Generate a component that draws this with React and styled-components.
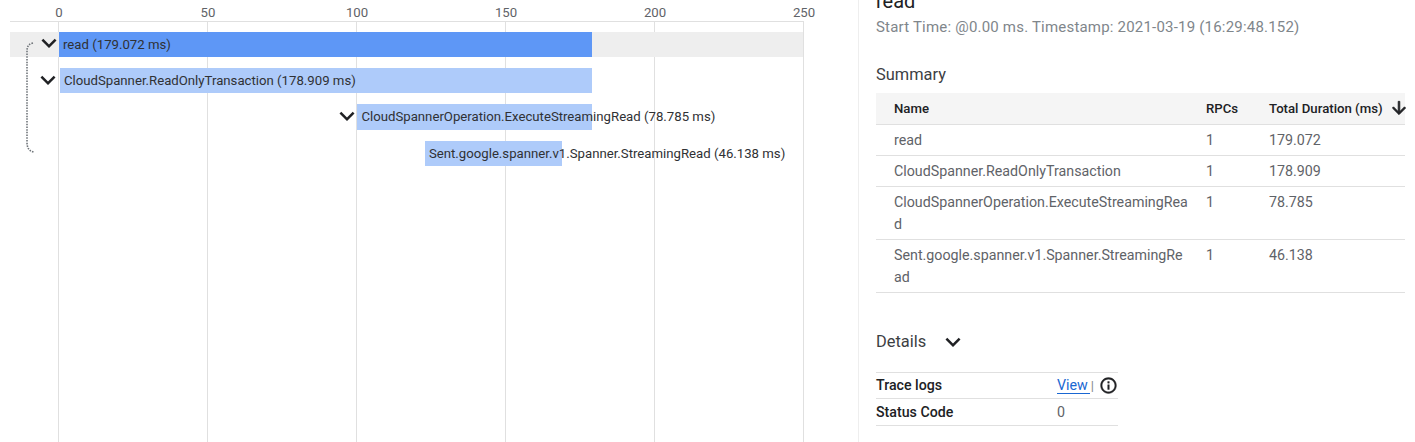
import React from "react"
import styled, { createGlobalStyle } from "styled-components"

const SCALE = 2.975
const ZERO_X = 49 // offset of 0 ms inside the row

const ticks = [0, 50, 100, 150, 200, 250]

const spans = [
	{ name: "read", start: 0, duration: 179.072, selected: true, open: true, overlap: 4.5 },
	{ name: "CloudSpanner.ReadOnlyTransaction", start: 0.3, duration: 178.909, open: true, overlap: 3.5 },
	{ name: "CloudSpannerOperation.ExecuteStreamingRead", start: 100.3, duration: 78.785, open: true, overlap: 4.5 },
	{ name: "Sent.google.spanner.v1.Spanner.StreamingRead", start: 123, duration: 46.138 },
]

const summary = [
	{ name: "read", rpcs: 1, total: "179.072" },
	{ name: "CloudSpanner.ReadOnlyTransaction", rpcs: 1, total: "178.909" },
	{ name: "CloudSpannerOperation.ExecuteStreamingRead", rpcs: 1, total: "78.785" },
	{ name: "Sent.google.spanner.v1.Spanner.StreamingRead", rpcs: 1, total: "46.138" },
]

const GlobalStyle = createGlobalStyle`
	html, body {
		margin: 0;
		height: 100%;
		overflow: hidden;
		background: #fff;
	}
	body {
		font-family: Roboto, "Liberation Sans", sans-serif;
		color: #3c4043;
	}
`

const Page = styled.div`
	display: flex;
	width: 1415px;
	height: 442px;
	overflow: hidden;
`

const ChartPane = styled.div`
	position: relative;
	flex: none;
	box-sizing: border-box;
	width: 859px;
	height: 442px;
	padding: 31.9px 0 0 10px;
	border-right: 1px solid #eeeeee;
`

const Grid = styled.div`
	position: absolute;
	top: 21px;
	left: 10px;
	bottom: 0;
	width: 794px;
	padding-left: 48px;
	box-sizing: border-box;
	display: flex;
	border-top: 1px solid #e0e0e0;
`

const Tick = styled.div`
	position: relative;
	flex: none;
	width: ${({ $last }) => ($last ? "1px" : "149px")};
	box-sizing: border-box;
	border-left: 1px solid #e0e0e0;
`

const TickLabel = styled.span`
	position: absolute;
	top: -17px;
	left: 0;
	transform: translateX(-50%);
	font-size: 13.2px;
	line-height: 16px;
	color: #5f6368;
`

const Rows = styled.div`
	position: relative;
	display: flex;
	flex-direction: column;
	gap: 10.95px;
	width: 793px;
`

const Row = styled.div`
	display: flex;
	height: 25.3px;
	background: ${({ $selected }) => ($selected ? "#eeeeee" : "transparent")};
`

const Bar = styled.div`
	position: relative;
	flex: none;
	box-sizing: border-box;
	height: 100%;
	padding-left: 4px;
	font-size: 13.2px;
	line-height: 25px;
	white-space: nowrap;
	color: #303134;
	background: ${({ $selected }) => ($selected ? "#5e97f6" : "#aecbfa")};
`

const Toggle = styled.svg`
	position: absolute;
	top: -3.5px;
	right: calc(100% - ${({ $overlap }) => $overlap}px);
	width: 30px;
	height: 30px;
	fill: #202124;
`

const Connector = styled.svg`
	position: absolute;
	top: 42px;
	left: 24px;
	width: 12px;
	height: 112px;
	fill: none;
	stroke: #70757a;
	stroke-width: 1.6;
	stroke-dasharray: 1.5 1.2;
`

const DetailPane = styled.div`
	flex: none;
	box-sizing: border-box;
	width: 529px;
	margin-left: 17px;
`

const Title = styled.h2`
	margin: -11px 0 0;
	font-size: 20px;
	font-weight: 400;
	line-height: 24px;
	color: #202124;
`

const Subtitle = styled.div`
	margin-top: 4px;
	font-size: 15px;
	letter-spacing: 0.2px;
	line-height: 20px;
	color: #80868b;
`

const SectionTitle = styled.h3`
	margin: 28px 0 0;
	font-size: 16.4px;
	font-weight: 400;
	line-height: 20px;
	color: #3c4043;
`

const SummaryTable = styled.table`
	width: 529px;
	margin-top: 8px;
	border-collapse: collapse;
	table-layout: fixed;
`

const HeadCell = styled.th`
	box-sizing: border-box;
	width: ${({ $width }) => $width}px;
	height: 31px;
	padding: 0 0 0 ${({ $pad }) => $pad || 0}px;
	background: #f5f5f5;
	border-bottom: 1px solid #e0e0e0;
	font-size: 13.2px;
	font-weight: 500;
	text-align: left;
	color: #202124;
	white-space: nowrap;
`

const HeadInner = styled.div`
	display: flex;
	align-items: center;
	justify-content: space-between;
`

const SortArrow = styled.svg`
	flex: none;
	width: 20px;
	height: 20px;
	margin-right: -4px;
	fill: #202124;
	stroke: #202124;
	stroke-width: 0.9;
`

const Cell = styled.td`
	padding: 4px 0 4px ${({ $pad }) => $pad || 0}px;
	border-bottom: 1px solid #e0e0e0;
	font-size: 14.25px;
	line-height: 22px;
	vertical-align: top;
	color: #5f6368;
`

const NameText = styled.div`
	width: 296px;
	word-break: break-all;
`

const DetailsHead = styled.div`
	display: flex;
	align-items: center;
	margin-top: 34px;
	font-size: 16.4px;
	line-height: 20px;
	color: #3c4043;
`

const DetailsToggle = styled.svg`
	width: 30px;
	height: 30px;
	margin-left: 12px;
	fill: #202124;
`

const DetailRows = styled.div`
	width: 242px;
	margin-top: 15px;
	border-top: 1px solid #e0e0e0;
`

const DetailRow = styled.div`
	display: grid;
	grid-template-columns: 181px 1fr;
	align-items: center;
	height: 25.7px;
	border-bottom: 1px solid #e0e0e0;
	font-size: 14.25px;
`

const DetailLabel = styled.span`
	font-size: 14.2px;
	font-weight: 500;
	color: #202124;
`

const DetailValue = styled.span`
	display: flex;
	align-items: center;
	color: #5f6368;
`

const LogLink = styled.a`
	padding-right: 2px;
	color: #1967d2;
	text-decoration: none;
	border-bottom: 1px solid #1967d2;
	line-height: 16px;
`

const Sep = styled.span`
	margin-left: 1px;
	font-size: 13px;
	color: #80868b;
`

const InfoIcon = styled.svg`
	width: 19px;
	height: 19px;
	margin-left: 5px;
	fill: #202124;
	stroke: #202124;
	stroke-width: 0.5;
`

const CHEVRON = "M16.59 8.59L12 13.17 7.41 8.59 6 10l6 6 6-6z"

const Chart = () => (
	<ChartPane>
		<Grid>
			{ticks.map((t, i) => (
				<Tick key={t} $last={i === ticks.length - 1}>
					<TickLabel>{t}</TickLabel>
				</Tick>
			))}
		</Grid>
		<Rows>
			{spans.map(s => (
				<Row key={s.name} $selected={s.selected}>
					<Bar
						$selected={s.selected}
						style={{
							marginLeft: ZERO_X + s.start * SCALE,
							width: s.duration * SCALE,
						}}
					>
						{s.open && (
							<Toggle viewBox="0 0 24 24" $overlap={s.overlap}>
								<path d={CHEVRON} />
							</Toggle>
						)}
						{`${s.name} (${s.duration.toFixed(3)} ms)`}
					</Bar>
				</Row>
			))}
		</Rows>
		<Connector viewBox="0 0 12 112">
			<path d="M9 1 C5 2 3 4 3 9 L3 100 C3 106 5 109 10 110" />
		</Connector>
	</ChartPane>
)

const Details = () => (
	<DetailPane>
		<Title>read</Title>
		<Subtitle>Start Time: @0.00 ms. Timestamp: 2021-03-19 (16:29:48.152)</Subtitle>
		<SectionTitle>Summary</SectionTitle>
		<SummaryTable>
			<thead>
				<tr>
					<HeadCell $width={330} $pad={18}>Name</HeadCell>
					<HeadCell $width={63}>RPCs</HeadCell>
					<HeadCell $width={136}>
						<HeadInner>
							Total Duration (ms)
							<SortArrow viewBox="0 0 24 24">
								<path d="M20 12l-1.41-1.41L13 16.17V4h-2v12.17l-5.58-5.59L4 12l8 8 8-8z" />
							</SortArrow>
						</HeadInner>
					</HeadCell>
				</tr>
			</thead>
			<tbody>
				{summary.map(r => (
					<tr key={r.name}>
						<Cell $pad={18}><NameText>{r.name}</NameText></Cell>
						<Cell>{r.rpcs}</Cell>
						<Cell>{r.total}</Cell>
					</tr>
				))}
			</tbody>
		</SummaryTable>
		<DetailsHead>
			Details
			<DetailsToggle viewBox="0 0 24 24">
				<path d={CHEVRON} />
			</DetailsToggle>
		</DetailsHead>
		<DetailRows>
			<DetailRow>
				<DetailLabel>Trace logs</DetailLabel>
				<DetailValue>
					<LogLink href="#">View</LogLink>
					<Sep>|</Sep>
					<InfoIcon viewBox="0 0 24 24">
						<path d="M11 7h2v2h-2zm0 4h2v6h-2zm1-9C6.48 2 2 6.48 2 12s4.48 10 10 10 10-4.48 10-10S17.52 2 12 2zm0 18c-4.41 0-8-3.59-8-8s3.59-8 8-8 8 3.59 8 8-3.59 8-8 8z" />
					</InfoIcon>
				</DetailValue>
			</DetailRow>
			<DetailRow>
				<DetailLabel>Status Code</DetailLabel>
				<DetailValue>0</DetailValue>
			</DetailRow>
		</DetailRows>
	</DetailPane>
)

const App = () => (
	<Page>
		<GlobalStyle />
		<Chart />
		<Details />
	</Page>
)

export default App
